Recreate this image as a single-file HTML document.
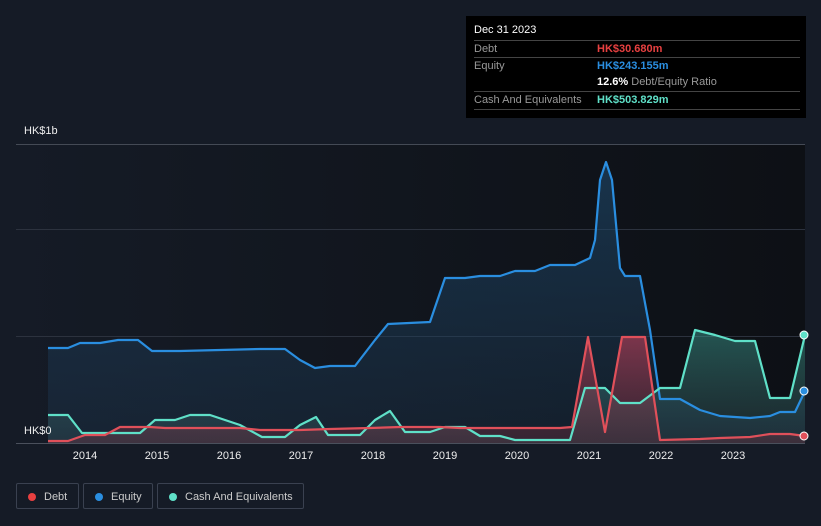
<!DOCTYPE html>
<html><head><meta charset="utf-8"><style>
body{margin:0;width:821px;height:526px;background:#151b26;font-family:"Liberation Sans",sans-serif;overflow:hidden;position:relative}
.tt{position:absolute;left:466px;top:16px;width:340px;height:102px;background:#000;color:#fff;font-size:11px}
.tt .r{position:absolute;left:8px;width:326px;border-top:1px solid #444;height:17px;line-height:17px;color:#999}
.tt .v{position:absolute;left:123px;font-weight:bold}
.leg{position:absolute;top:483px;height:26px;border:1px solid #3a4150;border-radius:2px;color:#ccc;font-size:11px;line-height:26px;box-sizing:border-box}
.leg i{position:absolute;left:11px;top:9px;width:8px;height:8px;border-radius:50%}
.leg span{position:absolute;left:27px}
.yr{position:absolute;top:450px;color:#eee;font-size:11px;transform:translateX(-50%)}
</style></head><body>
<svg width="821" height="526" style="position:absolute;left:0;top:0">
<defs>
<linearGradient id="bg" x1="0" y1="0" x2="1" y2="0"><stop offset="0" stop-color="#151b26"/><stop offset="1" stop-color="#0d1015"/></linearGradient>
<linearGradient id="ge" x1="0" y1="0" x2="0" y2="1"><stop offset="0" stop-color="#1e4a6e" stop-opacity=".6"/><stop offset="1" stop-color="#1e3a55" stop-opacity=".3"/></linearGradient>
<linearGradient id="gc" x1="0" y1="0" x2="0" y2="1"><stop offset="0" stop-color="#3fa89a" stop-opacity=".45"/><stop offset="1" stop-color="#3a5a60" stop-opacity=".3"/></linearGradient>
<linearGradient id="gd" x1="0" y1="0" x2="0" y2="1"><stop offset="0" stop-color="#c0405a" stop-opacity=".6"/><stop offset="1" stop-color="#803040" stop-opacity=".3"/></linearGradient>
</defs>
<rect x="16" y="144" width="789" height="299" fill="url(#bg)"/>
<g stroke="#2c323e" stroke-width="1"><line x1="16" y1="144.5" x2="805" y2="144.5" stroke="#444a55"/><line x1="16" y1="229.5" x2="805" y2="229.5"/><line x1="16" y1="336.5" x2="805" y2="336.5"/></g>
<path fill="url(#ge)" d="M48 348 L68 348 80 343 100 343 118 340 138 340 152 351 180 351 220 350 260 349 285 349 300 360 315 368 330 366 355 366 375 340 388 324 430 322 445 278 465 278 480 276 500 276 515 271 535 271 550 265 575 265 590 258 595 240 600 180 606 162 612 180 620 268 625 276 640 276 650 330 660 399 680 399 700 410 720 416 750 418 770 416 780 412 795 412 805 391 L805 443 L48 443Z"/>
<path fill="url(#gc)" d="M48 415 L68 415 82 433 140 433 155 420 175 420 190 415 210 415 240 425 262 437 285 437 300 425 316 417 328 435 360 435 375 420 390 411 405 432 430 432 445 427 465 427 480 436 500 436 515 440 570 440 585 388 605 388 620 403 640 403 660 388 680 388 695 330 715 335 735 341 755 341 770 398 790 398 805 335 L805 443 L48 443Z"/>
<path fill="url(#gd)" d="M48 441 L68 441 85 435 105 435 120 427 150 427 165 428 240 428 260 430 300 430 330 429 370 428 400 427 440 427 460 428 560 428 572 427 588 337 605 432 622 337 645 337 660 440 700 439 720 438 750 437 770 434 790 434 805 436 L805 443 L48 443Z"/>
<g fill="none" stroke-width="2.2" stroke-linejoin="round">
<path stroke="#2a8ee0" d="M48 348 L68 348 80 343 100 343 118 340 138 340 152 351 180 351 220 350 260 349 285 349 300 360 315 368 330 366 355 366 375 340 388 324 430 322 445 278 465 278 480 276 500 276 515 271 535 271 550 265 575 265 590 258 595 240 600 180 606 162 612 180 620 268 625 276 640 276 650 330 660 399 680 399 700 410 720 416 750 418 770 416 780 412 795 412 805 391"/>
<path stroke="#5fe0c8" d="M48 415 L68 415 82 433 140 433 155 420 175 420 190 415 210 415 240 425 262 437 285 437 300 425 316 417 328 435 360 435 375 420 390 411 405 432 430 432 445 427 465 427 480 436 500 436 515 440 570 440 585 388 605 388 620 403 640 403 660 388 680 388 695 330 715 335 735 341 755 341 770 398 790 398 805 335"/>
<path stroke="#e0505a" d="M48 441 L68 441 85 435 105 435 120 427 150 427 165 428 240 428 260 430 300 430 330 429 370 428 400 427 440 427 460 428 560 428 572 427 588 337 605 432 622 337 645 337 660 440 700 439 720 438 750 437 770 434 790 434 805 436"/>
</g>
<line x1="16" y1="443.5" x2="805" y2="443.5" stroke="#4a505c"/>
<circle cx="804" cy="391" r="4" fill="#2a8ee0" stroke="#fff" stroke-width="1"/>
<circle cx="804" cy="335" r="4" fill="#5fe0c8" stroke="#fff" stroke-width="1"/>
<circle cx="804" cy="436" r="4" fill="#e0505a" stroke="#fff" stroke-width="1"/>
</svg>
<div style="position:absolute;left:24px;top:125px;color:#eee;font-size:11px">HK$1b</div>
<div style="position:absolute;left:24px;top:425px;color:#eee;font-size:11px">HK$0</div>
<div class="yr" style="left:85px">2014</div><div class="yr" style="left:157px">2015</div><div class="yr" style="left:229px">2016</div><div class="yr" style="left:301px">2017</div><div class="yr" style="left:373px">2018</div><div class="yr" style="left:445px">2019</div><div class="yr" style="left:517px">2020</div><div class="yr" style="left:589px">2021</div><div class="yr" style="left:661px">2022</div><div class="yr" style="left:733px">2023</div>
<div class="tt">
<div style="position:absolute;left:8px;top:8px;font-size:11px;color:#fff">Dec 31 2023</div>
<div class="r" style="top:24px">Debt<span class="v" style="color:#e84040">HK$30.680m</span></div>
<div class="r" style="top:41px">Equity<span class="v" style="color:#2a8ee0">HK$243.155m</span></div>
<div class="r" style="top:58px;border-top:none"><span class="v" style="color:#fff">12.6% <span style="color:#999;font-weight:normal">Debt/Equity Ratio</span></span></div>
<div class="r" style="top:75px">Cash And Equivalents<span class="v" style="color:#5fe0c8">HK$503.829m</span></div>
<div style="position:absolute;left:8px;top:93px;width:326px;border-top:1px solid #444"></div>
</div>
<div class="leg" style="left:16px;width:63px"><i style="background:#e84040"></i><span>Debt</span></div>
<div class="leg" style="left:83px;width:70px"><i style="background:#2a8ee0"></i><span>Equity</span></div>
<div class="leg" style="left:157px;width:147px"><i style="background:#5fe0c8"></i><span>Cash And Equivalents</span></div>
</body></html>
